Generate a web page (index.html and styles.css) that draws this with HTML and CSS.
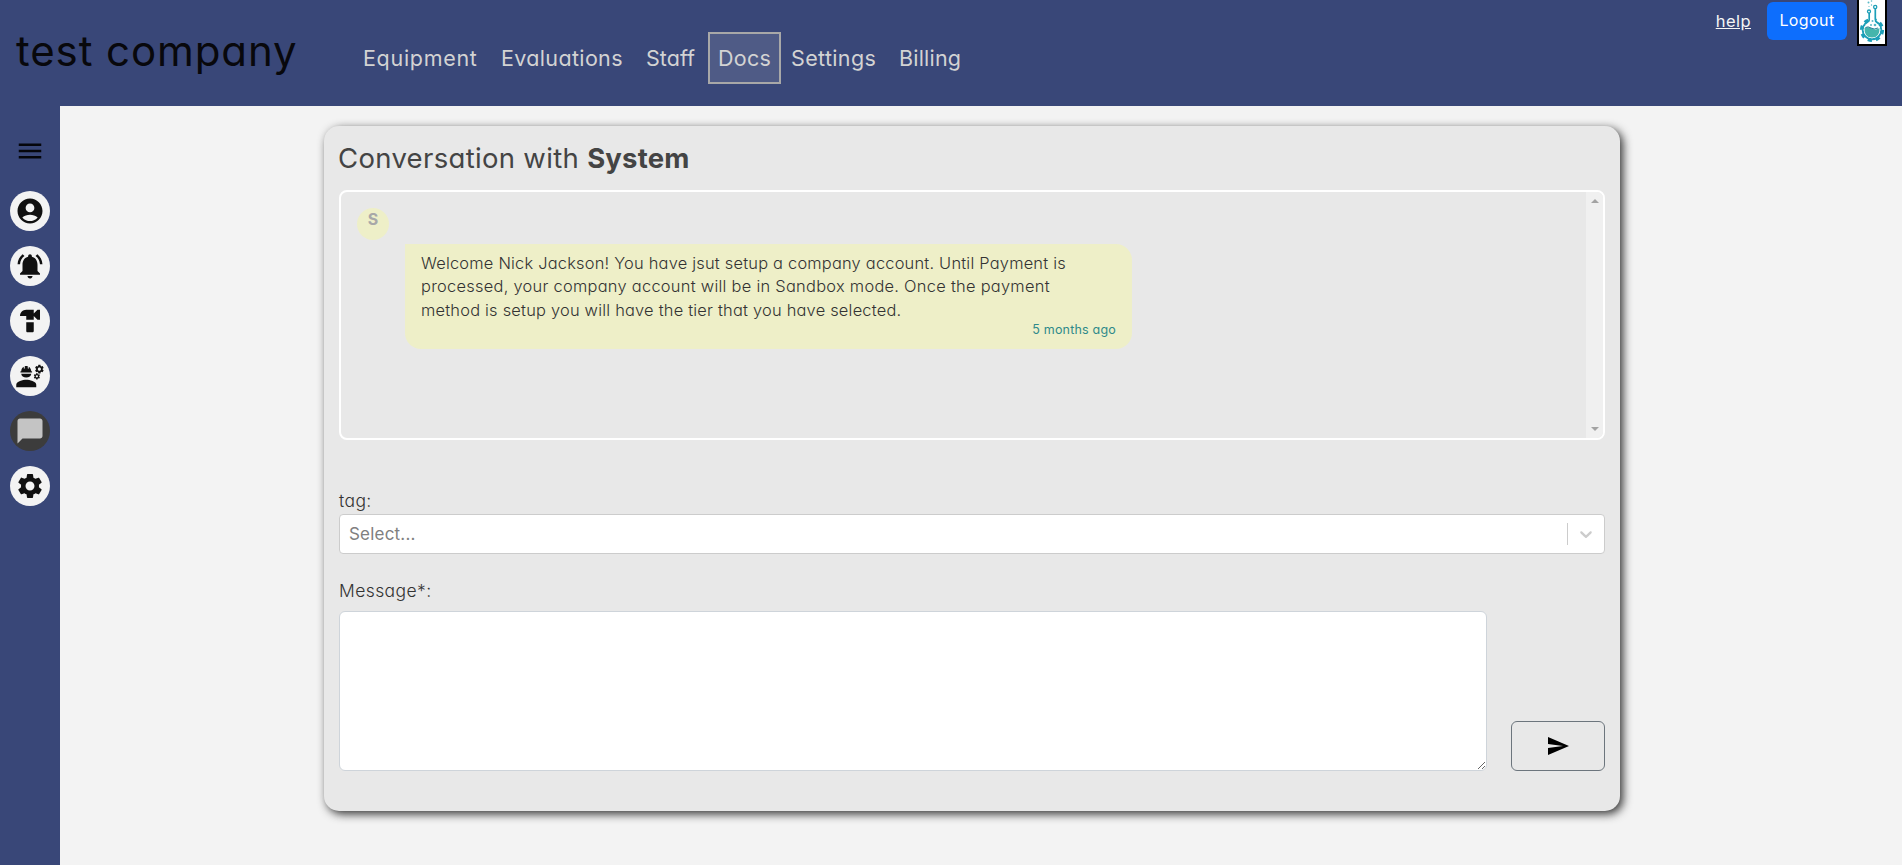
FILE: index.html
```html
<!DOCTYPE html>
<html lang="en">
<head>
<meta charset="utf-8">
<title>test company</title>
<link rel="stylesheet" href="styles.css">
</head>
<body>
<header class="header">
  <h1 class="brand">test company</h1>
  <nav class="nav">
    <a class="equipment">Equipment</a>
    <a class="evaluations">Evaluations</a>
    <a class="staff">Staff</a>
    <a class="docs active">Docs</a>
    <a class="settings">Settings</a>
    <a class="billing">Billing</a>
  </nav>
  <div class="account">
    <a class="help">help</a>
    <button class="logout">Logout</button>
    <div class="logo">
      <svg width="26" height="44" viewBox="0 0 26 44">
        <circle cx="13" cy="30" r="10.4" fill="none" stroke="#1d9fb8" stroke-width="3.4" stroke-dasharray="4.1 4.07"/>
        <circle cx="13" cy="30" r="9.3" fill="#fff" stroke="#1d9fb8" stroke-width="2"/>
        <path d="M10.200 12.500V20Q10 22 8 23L7 26H19L18 23Q16.300 22 16.300 19V8" fill="#fff" stroke="#1d9fb8" stroke-width="1.700"/>
        <circle cx="13" cy="30" r="8.300" fill="#fff"/>
        <path d="M5.500 28Q9 26.500 13 28.500T20.500 28Q21 37.500 13 37.500T5.500 28Z" fill="#45b5ac"/>
        <path d="M6.500 27.500Q9 26 12 28T19 28" fill="none" stroke="#2b8297"/>
        <circle cx="10" cy="11.500" r="1.500" fill="#fff" stroke="#1d9fb8" stroke-width="1.300"/>
        <circle cx="16.200" cy="7" r="1.600" fill="#fff" stroke="#1d9fb8" stroke-width="1.300"/>
        <g fill="#58b8c6"><circle cx="9.500" cy="2.500" r="1"/><circle cx="12.500" cy="1" r=".8"/><circle cx="12.500" cy="5" r=".7"/><circle cx="10" cy="6.500" r=".6"/><circle cx="13.500" cy="21" r="1"/><circle cx="12" cy="25" r="1"/><circle cx="16" cy="25" r="1.300"/></g>
      </svg>
    </div>
  </div>
</header>
<div class="shell">
  <aside class="sidebar">
    <svg class="menu" viewBox="0 0 24 24"><path d="M3 18h18v-2H3v2zm0-5h18v-2H3v2zm0-7v2h18V6H3z"/></svg>
    <a class="tool"><svg viewBox="0 0 24 24"><path d="M12 2C6.480 2 2 6.480 2 12s4.480 10 10 10 10-4.480 10-10S17.520 2 12 2zm0 4c1.930 0 3.500 1.570 3.500 3.500S13.930 13 12 13s-3.500-1.570-3.500-3.500S10.070 6 12 6zm0 14c-2.030 0-4.430-.82-6.140-2.880C7.550 15.800 9.680 15 12 15s4.450.8 6.140 2.120C16.430 19.180 14.030 20 12 20z"/></svg></a>
    <a class="tool"><svg viewBox="0 0 24 24"><path d="M7.580 4.080L6.150 2.650C3.750 4.480 2.170 7.300 2.030 10.500h2c.15-2.650 1.510-4.970 3.550-6.420zm12.390 6.420h2c-.15-3.200-1.730-6.020-4.120-7.850l-1.420 1.430c2.020 1.450 3.390 3.770 3.540 6.420zM18 11c0-3.070-1.640-5.640-4.500-6.320V4c0-.83-.67-1.500-1.500-1.500s-1.500.67-1.500 1.500v.68C7.630 5.360 6 7.920 6 11v5l-2 2v1h16v-1l-2-2v-5zm-6 11c.14 0 .27-.01.4-.04.65-.14 1.180-.58 1.440-1.180.1-.24.15-.5.15-.78h-4c.01 1.100.9 2 2.010 2z"/></svg></a>
    <a class="tool"><svg viewBox="0 0 24 24"><path d="M18 3l-3 3V3H9C6.240 3 4 5.240 4 8h5v3h6V8l3 3h2V3h-2zM9 13v7c0 .55.45 1 1 1h4c.55 0 1-.45 1-1v-7H9z"/></svg></a>
    <a class="tool"><svg viewBox="0 0 24 24" fill-rule="evenodd"><path d="M9 15c-2.670 0-8 1.340-8 4v2h16v-2c0-2.660-5.330-4-8-4z"/><path d="M22.100 6.840c.01-.11.02-.22.02-.34 0-.12-.01-.23-.03-.34l.74-.58c.07-.05.08-.15.04-.22l-.7-1.210c-.04-.08-.14-.1-.21-.08l-.86.35c-.18-.14-.38-.25-.59-.34l-.13-.93c-.02-.09-.09-.15-.18-.15h-1.400c-.09 0-.16.06-.17.15l-.13.93c-.21.09-.41.21-.59.34l-.87-.35c-.08-.03-.17 0-.21.08l-.7 1.210c-.04.08-.03.17.04.22l.74.58c-.02.11-.03.23-.03.34 0 .11.01.23.03.34l-.74.58c-.07.05-.08.15-.04.22l.7 1.210c.04.08.14.1.21.08l.87-.35c.18.14.38.25.59.34l.13.93c.01.09.08.15.17.15h1.400c.09 0 .16-.06.17-.15l.13-.93c.21-.09.41-.21.59-.34l.87.35c.08.03.17 0 .21-.08l.7-1.210c.04-.08.03-.17-.04-.22l-.73-.58zm-2.600.91c-.69 0-1.250-.56-1.250-1.250s.56-1.250 1.250-1.250 1.250.56 1.250 1.250-.56 1.250-1.250 1.250z"/><path d="M19.920 11.680l-.5.87c-.03.06-.1.08-.15.06l-.62-.25c-.13.1-.27.18-.42.24l-.09.66c-.02.06-.08.1-.14.1h-1c-.06 0-.11-.04-.12-.11l-.09-.66c-.15-.06-.29-.15-.42-.24l-.62.25c-.06.02-.12 0-.15-.06l-.5-.87c-.03-.06-.02-.12.03-.16l.53-.41c-.01-.08-.02-.16-.02-.24 0-.08.01-.17.02-.24l-.53-.41c-.05-.04-.06-.11-.03-.16l.5-.87c.03-.06.1-.08.15-.06l.62.25c.13-.1.27-.18.42-.24l.09-.66c.01-.07.06-.11.12-.11h1c.06 0 .12.04.12.11l.09.66c.15.06.29.15.42.24l.62-.25c.06-.02.12 0 .15.06l.5.87c.03.06.02.12-.03.16l-.52.41c.01.08.02.16.02.24 0 .08-.01.17-.02.24l.53.41c.05.04.06.11.04.17z" transform="translate(0 1.400)"/><circle cx="17.500" cy="12.260" r=".9" fill="#f3f3f3"/><path d="M5 10.200h8a4 3 0 0 1-8 0zM4.740 9.200h8.520c.27 0 .49-.22.49-.49s-.22-.49-.49-.49H13c0-1.480-.81-2.970-2-3.670v1.200c0 .5-.8.500-.8 0V4.140c-.8-.2-1.600-.2-2.400 0V5.750c0 .5-.8.500-.8 0v-1.200C5.810 5.250 5 6.520 5 8.220h-.26c-.27 0-.49.22-.49.49s.22.490.49.490z"/></svg></a>
    <a class="tool current"><svg viewBox="0 0 24 24"><path d="M20 2H4c-1.100 0-2 .9-2 2v18l4-4h14c1.100 0 2-.9 2-2V4c0-1.100-.9-2-2-2z"/></svg></a>
    <a class="tool"><svg viewBox="0 0 24 24"><path d="M19.140 12.940c.04-.3.06-.61.06-.94 0-.32-.02-.64-.07-.94l2.030-1.580c.18-.14.23-.41.12-.61l-1.920-3.320c-.12-.22-.37-.29-.59-.22l-2.390.96c-.5-.38-1.030-.7-1.620-.94l-.36-2.540c-.04-.24-.24-.41-.48-.41h-3.840c-.24 0-.43.17-.47.41l-.36 2.540c-.59.24-1.130.57-1.620.94l-2.390-.96c-.22-.08-.47 0-.59.22L2.740 8.870c-.12.21-.08.47.12.61l2.030 1.580c-.05.3-.09.63-.09.94s.02.64.07.94l-2.030 1.580c-.18.14-.23.41-.12.61l1.920 3.320c.12.22.37.29.59.22l2.390-.96c.5.38 1.030.7 1.620.94l.36 2.540c.05.24.24.41.48.41h3.840c.24 0 .44-.17.47-.41l.36-2.540c.59-.24 1.130-.56 1.620-.94l2.390.96c.22.08.47 0 .59-.22l1.920-3.320c.12-.22.07-.47-.12-.61l-2.010-1.580zM12 15.600c-1.980 0-3.600-1.620-3.600-3.600s1.620-3.600 3.600-3.600 3.600 1.620 3.600 3.600-1.620 3.600-3.600 3.600z"/></svg></a>
  </aside>
  <main class="main">
    <section class="card">
      <h2 class="title">Conversation with <b>System</b></h2>
      <div class="chat">
        <div class="messages">
          <div class="avatar">S</div>
          <div class="bubble">
            <p>Welcome Nick Jackson! You have jsut setup a company account. Until Payment is<br><span class="second">processed, your company account will be in Sandbox mode. Once the payment</span><br>method is setup you will have the tier that you have selected.</p>
            <time>5 months ago</time>
          </div>
        </div>
        <div class="scrollbar"><i class="up"></i><i class="down"></i></div>
      </div>
      <label class="label tag">tag:</label>
      <div class="select">
        <div class="placeholder">Select...</div>
        <div class="indicator"><svg width="20" height="20" viewBox="0 0 20 20"><path d="M4.516 7.548c.436-.446 1.043-.481 1.576 0L10 11.295l3.908-3.747c.533-.481 1.141-.446 1.574 0 .436.445.408 1.197 0 1.615-.406.418-4.695 4.502-4.695 4.502a1.095 1.095 0 0 1-1.576 0S4.924 9.581 4.516 9.163c-.409-.418-.436-1.170 0-1.615z"/></svg></div>
      </div>
      <label class="label message">Message*:</label>
      <div class="compose">
        <textarea class="input"></textarea>
        <button class="send"><svg width="24" height="24" viewBox="0 0 24 24"><path d="M2.010 21L23 12 2.010 3 2 10l15 2-15 2z"/></svg></button>
      </div>
    </section>
  </main>
</div>
</body>
</html>
```
FILE: styles.css
```css
* { box-sizing: border-box; }
body { margin: 0; height: 865px; overflow: hidden; background: #f3f3f3; color: #3c3c3c; font-family: Inter, "Open Sans", sans-serif; font-feature-settings: "cv11"; font-weight: 300; font-size: 16px; }
h1, h2, p { margin: 0; font-weight: 400; }
button { font: inherit; font-feature-settings: inherit; }
.header { display: flex; height: 106px; background: #394778; }
.brand { width: 354px; padding: 26px 0 0 16px; font-size: 42px; font-weight: 400; line-height: 50px; letter-spacing: .9px; color: #08080c; white-space: nowrap; }
.nav { display: flex; align-items: flex-start; padding-top: 32px; font-size: 21.5px; line-height: 48px; font-weight: 400; color: #d3d3d3; }
.nav a { height: 52px; border: 2px solid transparent; padding-left: 7px; white-space: nowrap; }
.nav .equipment { width: 138px; letter-spacing: .7px; }
.nav .evaluations { width: 145px; letter-spacing: .35px; }
.nav .staff { width: 71px; letter-spacing: .05px; }
.nav .docs { width: 73px; padding-left: 8px; letter-spacing: .3px; }
.nav .settings { width: 109px; padding-left: 8px; letter-spacing: .35px; }
.nav .billing { width: 80px; letter-spacing: .2px; }
.nav .active { background: #4f5b86; border-color: #a8a8a8; }
.account { display: flex; align-items: flex-start; margin-left: auto; padding-right: 15px; font-weight: 400; color: #f5f5f5; }
.help { margin: 9px 16px 0 0; line-height: 24px; font-size: 16.5px; letter-spacing: .45px; text-decoration: underline; }
.logout { width: 80px; height: 38px; margin: 2px 10px 0 0; padding: 0 0 2px; border: 0; border-radius: 6px; background: #0d6efd; color: #fff; letter-spacing: .4px; }
.logo { width: 30px; height: 46px; border: 2px solid #000; border-top: 0; background: #fff; }
.logo svg { display: block; }
.shell { display: flex; height: 759px; }
.sidebar { display: flex; flex-direction: column; align-items: center; gap: 15px; width: 60px; padding-top: 30px; background: #394778; }
.menu { width: 30px; height: 30px; margin-bottom: 10px; fill: #05060c; }
.tool { display: grid; place-items: center; width: 40px; height: 40px; border-radius: 50%; background: #f3f3f3; }
.tool svg { width: 30px; height: 30px; fill: #101010; }
.tool.current { background: #3c3c3c; }
.tool.current svg { fill: #c4c4c4; }
.main { flex: 1; padding: 20px 282px 0 264px; }
.card { height: 685px; padding: 15px; border-radius: 15px; background: #e8e8e8; box-shadow: 3px 3px 10px #333; }
.title { height: 49px; margin-left: -1px; font-size: 27.5px; line-height: 34px; letter-spacing: .32px; color: #444; }
.title b { font-weight: 700; letter-spacing: .2px; }
.chat { display: flex; height: 250px; border: 2px solid #fff; border-radius: 8px; overflow: hidden; }
.messages { flex: 1; padding: 16px; }
.avatar { width: 32px; height: 32px; border-radius: 50%; background: #eeefc8; color: #a8a8a8; font-weight: 700; line-height: 23px; text-align: center; }
.bubble { width: 727px; height: 105px; margin: 4px 0 0 48px; padding: 8px 16px; border-radius: 0 16px 16px 16px; background: #eeefc8; color: #333; }
.bubble p { line-height: 23.4px; font-size: 16.4px; font-weight: 350; letter-spacing: .22px; white-space: nowrap; }
.bubble .second { letter-spacing: .28px; }
.bubble time { display: block; margin-top: -1px; text-align: right; font-size: 12.5px; font-weight: 400; line-height: 18px; letter-spacing: .2px; color: #2f8a8a; }
.scrollbar { display: flex; flex-direction: column; justify-content: space-between; align-items: center; width: 17px; padding: 7px 0; background: #f0f0f0; }
.up, .down { border: 4px solid transparent; }
.up { border-top: 0; border-bottom-color: #a3a3a3; }
.down { border-bottom: 0; border-top-color: #a3a3a3; }
.label { display: block; font-size: 17.5px; font-weight: 350; line-height: 26px; letter-spacing: .4px; color: #333; }
.tag { margin-top: 48px; }
.select { display: flex; align-items: center; height: 40px; border: 1px solid #ccc; border-radius: 4px; background: #fff; }
.placeholder { flex: 1; padding-left: 9px; font-size: 17px; font-weight: 400; letter-spacing: .2px; color: #808080; }
.indicator { display: grid; place-items: center; width: 37px; height: 22px; border-left: 1px solid #ccc; fill: #ccc; }
.message { margin: 24px 0 7px; }
.compose { display: flex; align-items: flex-end; justify-content: space-between; height: 160px; }
.input { width: 1148px; height: 160px; border: 1px solid #ced4da; border-radius: 6px; background: #fff; resize: both; }
.send { display: grid; place-items: center; width: 94px; height: 50px; padding: 0; border: 1px solid #6c757d; border-radius: 6px; background: transparent; }
```
